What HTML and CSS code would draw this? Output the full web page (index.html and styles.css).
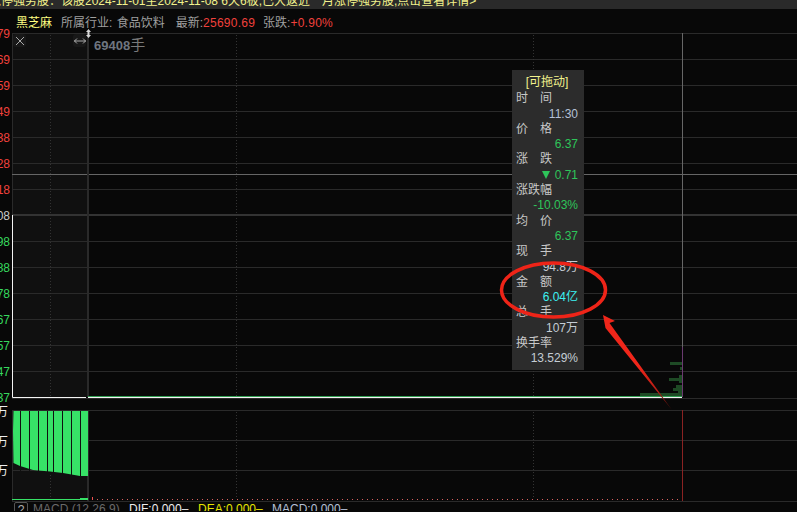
FILE: index.html
```html
<!DOCTYPE html>
<html lang="zh">
<head>
  <meta charset="UTF-8">
  <title>黑芝麻 分时</title>
  <link rel="stylesheet" href="styles.css">
</head>
<body>
  <div class="banner"><span class="banner-text">涨停强势股：该股2024-11-01至2024-11-08 6天6板,已大返近一月涨停强势股,点击查看详情&gt;</span></div>
  <div class="titlebar">
    <span class="stock">黑芝麻</span>
    <span class="industry">所属行业: 食品饮料</span>
    <span class="quote">最新:<em>25690.69</em></span>
    <span class="quote">张跌:<em>+0.90%</em></span>
  </div>

  <div class="chart">
    <div class="axis">
      <div class="axis-upper">
        <span class="up">7.79</span><span class="up">7.69</span><span class="up">7.59</span><span class="up">7.49</span><span class="up">7.38</span><span class="up">7.28</span><span class="up">7.18</span>
        <span class="flat">7.08</span>
        <span class="down">6.98</span><span class="down">6.88</span><span class="down">6.78</span><span class="down">6.67</span><span class="down">6.57</span><span class="down">6.47</span><span class="down">6.37</span>
      </div>
      <div class="axis-lower">
        <span>90万</span><span>60万</span><span>30万</span>
      </div>
    </div>

    <svg class="plot" viewBox="12 33 785 470" width="785" height="470">
      <rect class="shade" x="12" y="33" width="76" height="364"/>
      <rect class="shade" x="12" y="410" width="76" height="90"/>
      <path class="grid" d="M12 33.5H797M12 59.5H797M12 85.5H797M12 111.5H797M12 137.5H797M12 163.5H797M12 189.5H797M12 241.5H797M12 267.5H797M12 293.5H797M12 319.5H797M12 345.5H797M12 371.5H797M12 398.5H797M12 410.5H797M12 440.5H797M12 470.5H797M12 501.5H797M12.5 33V215M12.5 410V501"/>
      <path class="grid-mid" d="M12 215H797"/>
      <path class="grid-now" d="M12 174.5H797"/>
      <path class="grid-dot" d="M50.5 35V397M236.5 35V397M533.5 35V397M50.5 475V498M236.5 412V498M533.5 412V498"/>
      <path class="grid-thick" d="M88 33V397M88 410V501"/>

      <path class="cursor" d="M682.5 33V347"/>
      <path class="cursor-vol" d="M682.5 347V397"/>
      <path class="cursor-macd" d="M682.5 410V501"/>

      <path class="dist" d="M670 362h12v3h-12zM680 367h2v3h-2zM679 375h3v3h-3zM669 378h13v3h-13zM679 381h3v2h-3zM676 385h6v3h-6zM673 388h9v3h-9zM678 391h4v2h-4zM640 393h42v3h-42z"/>

      <path class="price-green" d="M88 396.5H682"/>
      <path class="price-white" d="M12.5 215V397.5H86M88 397.5H682"/>

      <polygon class="vol" points="13,431 13.5,411 88,411 88,476 80,476 63,473 50,471.5 33,470 20,466 13.5,463"/>
      <path class="vol-gap" d="M20.5 411V476M29.5 411V476M38.5 411V476M47.5 411V476M53.5 411V476M62.5 411V476M71.5 411V476M80.5 411V476"/>

      <path class="macd-zero" d="M12 499.5H88M80 498.5H88"/>
      <path class="macd-tick" d="M92.5 497V500"/>
      <path class="macd-dots" d="M97 499.5H680"/>
    </svg>

    <div class="tool tool-close">
      <svg viewBox="0 0 10 10" width="10" height="10"><path d="M1 1L9 9M9 1L1 9"/></svg>
    </div>
    <div class="tool tool-resize">
      <svg viewBox="0 0 12 6" width="12" height="6"><path d="M0 3H12M3 0.5L0.5 3L3 5.5M9 0.5L11.5 3L9 5.5"/></svg>
    </div>
    <svg class="splitter" viewBox="0 0 5 9" width="5" height="9"><path d="M2.5 0L5 3H3.5V6H5L2.5 9L0 6H1.5V3H0Z"/></svg>
    <div class="volume-tag"><b>69408</b>手</div>

    <div class="tip">
      <div class="tip-head">[可拖动]</div>
      <div class="tip-key"><span>时</span><span>间</span></div>
      <div class="tip-val time">11:30</div>
      <div class="tip-key"><span>价</span><span>格</span></div>
      <div class="tip-val green">6.37</div>
      <div class="tip-key"><span>涨</span><span>跌</span></div>
      <div class="tip-val green"><i class="tri"></i>0.71</div>
      <div class="tip-key">涨跌幅</div>
      <div class="tip-val green">-10.03%</div>
      <div class="tip-key"><span>均</span><span>价</span></div>
      <div class="tip-val green">6.37</div>
      <div class="tip-key"><span>现</span><span>手</span></div>
      <div class="tip-val plain">94.8万</div>
      <div class="tip-key"><span>金</span><span>额</span></div>
      <div class="tip-val cyan">6.04亿</div>
      <div class="tip-key"><span>总</span><span>手</span></div>
      <div class="tip-val plain">107万</div>
      <div class="tip-key">换手率</div>
      <div class="tip-val plain">13.529%</div>
    </div>

    <!-- 红圈和箭头标注 -->
    <svg class="markup" viewBox="0 33 797 470" width="797" height="470">
      <defs>
        <linearGradient id="tail" gradientUnits="userSpaceOnUse" x1="640" y1="365" x2="672" y2="410">
          <stop offset="0" stop-color="#f0261a"/>
          <stop offset="0.6" stop-color="#b01c14"/>
          <stop offset="1" stop-color="#3a0c08"/>
        </linearGradient>
      </defs>
      <ellipse class="ring" cx="553.5" cy="290" rx="52" ry="27"/>
      <polygon fill="url(#tail)" points="603,315 615,321 609.5,323 672,410 605.5,328"/>
    </svg>
  </div>

  <div class="legend">
    <span class="help">?</span>
    <span class="macd-name">MACD (12,26,9)</span>
    <span class="dif">DIF:0.000–</span>
    <span class="dea">DEA:0.000–</span>
    <span class="macd">MACD:0.000–</span>
  </div>
</body>
</html>
```

FILE: styles.css
```css
:root {
  --bg: #080808;
  --line: #2a2a2a;
  --red: #f0413c;
  --green: #37e267;
  --font: 'Liberation Sans', 'Noto Sans CJK SC', sans-serif;
}
html, body {
  margin: 0;
  padding: 0;
  height: 512px;
  overflow: hidden;
}
body {
  background: var(--bg);
  color: #bbb;
  font-family: var(--font);
  font-size: 12px;
}

.banner {
  height: 9px;
  background: #2a2a2a;
  overflow: hidden;
  white-space: nowrap;
}
.banner-text {
  display: block;
  margin: -6px 0 0 -11px;
  line-height: 15px;
  color: #f2f28c;
}

.titlebar {
  height: 24px;
  display: flex;
  align-items: center;
  padding-left: 16px;
  color: #a0a0a0;
  white-space: nowrap;
}
.stock { color: #ffff80; margin-right: 9px; }
.industry { margin-right: 11px; word-spacing: 1px; }
.quote { margin-right: 8px; }
.quote em { font-style: normal; color: var(--red); letter-spacing: 0.25px; }

.chart {
  position: relative;
  display: flex;
  height: 470px;
}
.axis {
  flex: none;
  width: 10px;
  margin-right: 2px;
  overflow: hidden;
  margin-top: -13px;
  height: 483px;
  white-space: nowrap;
}
.axis-upper span, .axis-lower span {
  display: flex;
  justify-content: flex-end;
}
.axis-upper span {
  height: 26px;
  line-height: 28px;
}
.axis-lower { margin-top: -13px; }
.axis-lower span {
  height: 29.5px;
  line-height: 30px;
  padding-right: 2px;
  color: #eee;
}
.up { color: var(--red); }
.flat { color: #c8c8c8; }
.down { color: #36d85e; }

.plot { flex: none; display: block; }
.shade { fill: #101010; }
.plot path { fill: none; }
.grid { stroke: var(--line); stroke-width: 1; }
.grid-mid { stroke: #333; stroke-width: 2; }
.grid-now { stroke: #666; stroke-width: 1; }
.grid-dot { stroke: #333; stroke-width: 1; stroke-dasharray: 1 2; }
.grid-thick { stroke: #2a2a2a; stroke-width: 2; }
.cursor { stroke: #666; stroke-width: 1; }
.cursor-vol { stroke: #6a3a70; stroke-width: 1; }
.cursor-macd { stroke: #8a2222; stroke-width: 1; }
.plot .dist { fill: #1e4a25; }
.price-green { stroke: #2f9e50; stroke-width: 1; }
.price-white { stroke: #f4f4f4; stroke-width: 1; }
.vol { fill: var(--green); }
.vol-gap { stroke: #101010; stroke-width: 1; }
.macd-zero { stroke: var(--green); stroke-width: 1; }
.macd-tick { stroke: #f05050; stroke-width: 1; }
.macd-dots { stroke: #d86060; stroke-width: 1; stroke-dasharray: 1 4; }

.tool {
  position: absolute;
  top: 1px;
  width: 13px;
  height: 13px;
  display: flex;
  align-items: center;
  justify-content: center;
  background: #181818;
  border-radius: 3px;
}
.tool svg path { fill: none; stroke: #a8a8a8; stroke-width: 1; }
.tool-close { left: 13px; }
.tool-resize { left: 73px; }
.splitter {
  position: absolute;
  left: 86px;
  top: -4px;
}
.splitter path { fill: #d8d8d8; }
.volume-tag {
  position: absolute;
  left: 94px;
  top: 3px;
  font-size: 15px;
  line-height: 18px;
  color: #7a7a7a;
}
.volume-tag b { color: #6f7680; font-size: 13px; }

.tip {
  position: absolute;
  left: 512px;
  top: 37px;
  width: 72px;
  height: 300px;
  box-sizing: border-box;
  padding: 5px 6px 0 4px;
  background: #2c2c2c;
  font-size: 12px;
  line-height: 15.3px;
}
.tip-head { text-align: center; color: #f2f28c; padding-left: 0; }
.tip-key { display: flex; gap: 12px; color: #c8c8c8; margin-top: 0; }
.tip-head + .tip-key { margin-top: 1px; }
.tip-val { text-align: right; }
.time { color: #b4c0d6; }
.green { color: #2ec45a; }
.cyan { color: #3cf2f2; }
.plain { color: #c4ccd4; }
.tri {
  display: inline-block;
  margin-right: 5px;
  border-style: solid;
  border-width: 8px 4.5px 0;
  border-color: #2ec45a transparent transparent;
}

.markup {
  position: absolute;
  left: 0;
  top: 0;
  pointer-events: none;
}
.ring { fill: none; stroke: #ee2418; stroke-width: 3.5; }

.legend {
  height: 9px;
  display: flex;
  align-items: flex-start;
  padding-left: 14px;
  overflow: hidden;
  white-space: nowrap;
  line-height: 15px;
  margin-top: -1px;
}
.help {
  box-sizing: border-box;
  width: 14px;
  height: 16px;
  margin-right: 5px;
  border: 1px solid #555;
  border-radius: 2px;
  color: #aaa;
  text-align: center;
  line-height: 14px;
}
.macd-name { color: #6a6a6a; margin-right: 10px; width: 86px; }
.dif { color: #eee; width: 69px; }
.dea { color: #e6e600; width: 74px; }
.macd { color: #b4c0d6; }
```
